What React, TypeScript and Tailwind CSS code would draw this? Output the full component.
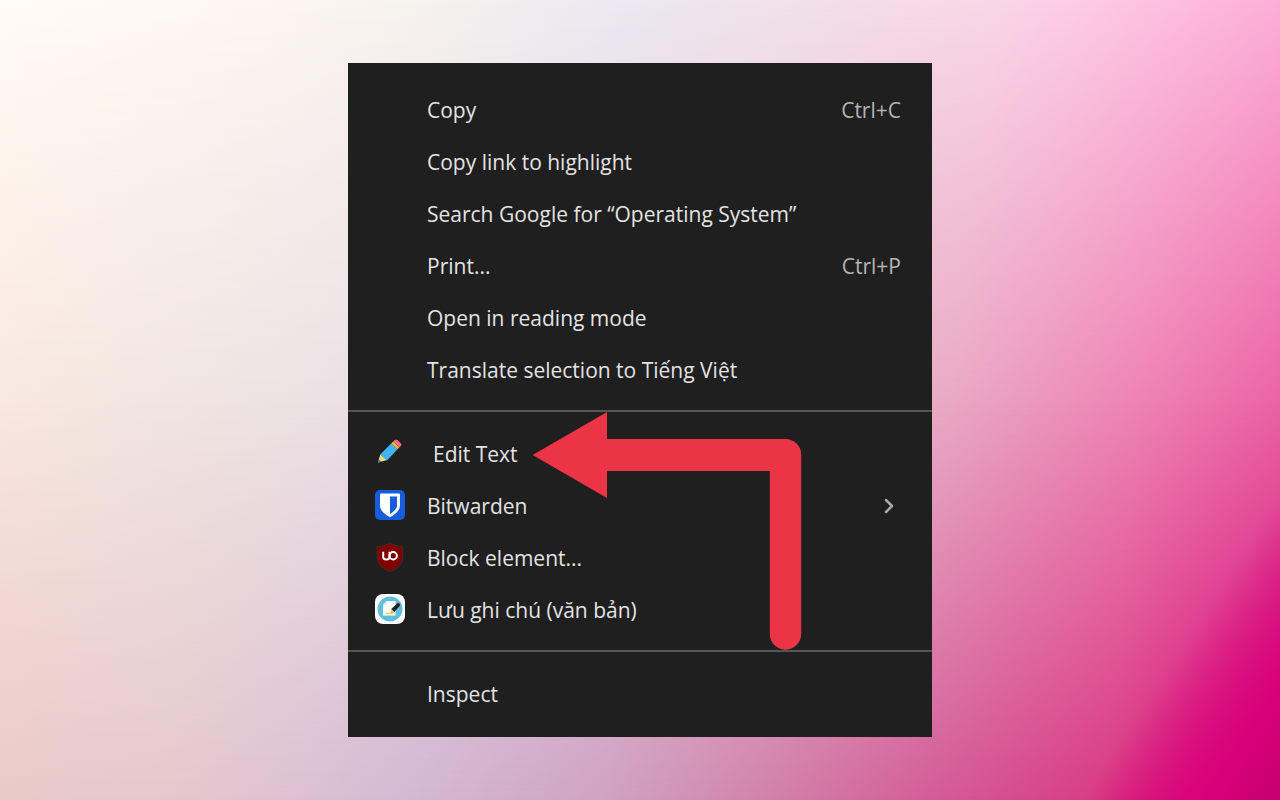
import type { ReactNode } from 'react';
import { ChevronRight } from 'lucide-react';

type Item = {
  label: string;
  shortcut?: string;
  icon?: ReactNode;
  submenu?: boolean;
  inset?: boolean;
};

function PencilIcon() {
  return (
    <svg viewBox="0 0 30 30" className="size-[30px]" aria-hidden="true">
      <path d="M5.2 16.500 3 24.600 12.200 22z" fill="#ffd766" />
      <path d="M3.800 21.600 3 24.800 6.400 23.800z" fill="#1f7fc4" />
      <path d="M5.200 16.500 16.200 5.400l6.300 5.800-10.500 11.200z" fill="#40b4f5" />
      <path d="M16.200 5.400 18.200 3.400l6.200 5.800-1.900 2z" fill="#ffb636" />
      <path d="M18.200 3.400 19.800 2q1.300-1.200 2.600 0l3.500 3.400q1.200 1.300 0 2.500l-1.500 1.300z" fill="#ff6d88" />
    </svg>
  );
}

function BitwardenIcon() {
  return (
    <svg viewBox="0 0 30 30" className="size-[30px]" aria-hidden="true">
      <rect width="30" height="30" rx="5" fill="#175ddc" />
      <path d="M6.2 3.5h17.6q1.2 0 1.2 1.2V15c0 5.500-4 9-10 12.200C9 24 5 20.500 5 15V4.700q0-1.200 1.200-1.200z" fill="#fff" />
      <path d="M15 6.600h7V15c0 3.700-2.500 6-7 8.900z" fill="#175ddc" />
    </svg>
  );
}

function BlockerIcon() {
  return (
    <svg viewBox="0 0 30 30" className="size-[30px]" aria-hidden="true">
      <path d="M15 .5c4 2.700 8 4.200 12.800 4.200V15c0 7-5 11-12.800 14.600C7.200 26 2.200 22 2.200 15V4.700C7 4.700 11 3.200 15 .5z" fill="#800000" stroke="#3f2d2d" strokeWidth="1" />
      <g fill="none" stroke="#fff" strokeWidth="2">
        <path d="M8.200 9.800v5q0 2.700 2.800 2.700h.7q2.800 0 2.800-2.700v-5" />
        <circle cx="18.200" cy="13.800" r="3.700" />
      </g>
    </svg>
  );
}

function NoteIcon() {
  return (
    <svg viewBox="0 0 30 30" className="size-[30px]" aria-hidden="true">
      <rect width="30" height="30" rx="8" fill="#fff" />
      <circle cx="15" cy="15" r="12.500" fill="#62bddb" />
      <path d="M11.500 7H20.500v14.500H8V10.500z" fill="#fff" />
      <path d="M11.500 7v3.500H8z" fill="#c5e6f1" />
      <path d="M10.500 19.500h7" stroke="#f4c95d" strokeWidth="1.400" />
      <path d="m16.200 16 2.800 2.800-3.400 1.200z" fill="#e8b53b" />
      <path d="m16.200 15 6-5.600q1.200-.9 2.300.2t.2 2.300l-5.500 6.200z" fill="#1d2329" />
    </svg>
  );
}

const groups: Item[][] = [
  [
    { label: 'Copy', shortcut: 'Ctrl+C' },
    { label: 'Copy link to highlight' },
    { label: 'Search Google for “Operating System”' },
    { label: 'Print...', shortcut: 'Ctrl+P' },
    { label: 'Open in reading mode' },
    { label: 'Translate selection to Tiếng Việt' },
  ],
  [
    { label: 'Edit Text', icon: <PencilIcon />, inset: true },
    { label: 'Bitwarden', icon: <BitwardenIcon />, submenu: true },
    { label: 'Block element...', icon: <BlockerIcon /> },
    { label: 'Lưu ghi chú (văn bản)', icon: <NoteIcon /> },
  ],
  [{ label: 'Inspect' }],
];

function MenuItem({ label, shortcut, icon, submenu, inset }: Item) {
  return (
    <button
      type="button"
      role="menuitem"
      aria-haspopup={submenu ? 'menu' : undefined}
      className="flex h-[52px] w-full items-center pr-[31px] pl-[27px] text-left"
    >
      <span className="mr-[22px] w-[30px] shrink-0 pb-[2px]">{icon}</span>
      <span className={inset ? 'grow pl-[6px]' : 'grow'}>{label}</span>
      {shortcut && <span className="text-[#b4b4b4]">{shortcut}</span>}
      {submenu && <ChevronRight className="size-6 text-[#a8a8a8]" strokeWidth={2.5} aria-hidden="true" />}
    </button>
  );
}

export default function App() {
  return (
    <main className="relative isolate flex min-h-screen items-center justify-center overflow-hidden bg-[linear-gradient(95deg,#fffcf4_0%,#fff7f3_16%,#f7f3ef_30%,#ebe9f1_46%,#f3dfe8_62%,#fad6e8_74%,#fdcae5_81%,#fca5d3_100%)] font-['Open_Sans','Noto_Sans',sans-serif] text-[21px] leading-7 text-[#e3e3e3]">
      <div className="absolute inset-0 -z-10 bg-[linear-gradient(95deg,#fbe9df_0%,#f2e6e0_13%,#ebe1e5_27%,#e6c8d8_50%,#e9a9c4_73%,#ee83b4_87%,#ea5ca1_100%)] [mask-image:linear-gradient(180deg,transparent_0%,#000_50%)]" />
      <div className="absolute inset-0 -z-10 bg-[linear-gradient(95deg,#ecc9c4_0%,#e5c8cc_17%,#dcc0d2_28%,#d3b8d2_36%,#cfa2c2_50%,#d182aa_62%,#d35d97_74%,#d83a83_87%,#d6157a_94%,#c4006e_100%)] [mask-image:linear-gradient(180deg,transparent_50%,#000_100%)]" />
      <div className="absolute inset-0 -z-10 bg-[linear-gradient(123deg,rgb(217_0_122/0)_89%,#d9007a_96%,#c4006e_100%)]" />
      <div role="menu" className="relative w-full max-w-[584px] bg-[#1f1f1f] pt-[5px] pb-[3px]">
        {groups.map((items, index) => (
          <div
            key={index}
            role="group"
            className="border-b-2 border-[#565656] pt-4 pb-[14px] last-of-type:border-b-0"
          >
            {items.map((item) => (
              <MenuItem key={item.label} {...item} />
            ))}
          </div>
        ))}
        <svg
          viewBox="0 0 270 240"
          className="pointer-events-none absolute top-[348px] left-[184px] h-[240px] w-[270px]"
          aria-hidden="true"
        >
          <path d="M.6 44 75 1v27h178.500a15.700 15.700 0 0 1 15.700 15.700V223a15.700 15.700 0 0 1-31.400 0V60H75v27z" fill="#eb3446" />
        </svg>
      </div>
    </main>
  );
}
